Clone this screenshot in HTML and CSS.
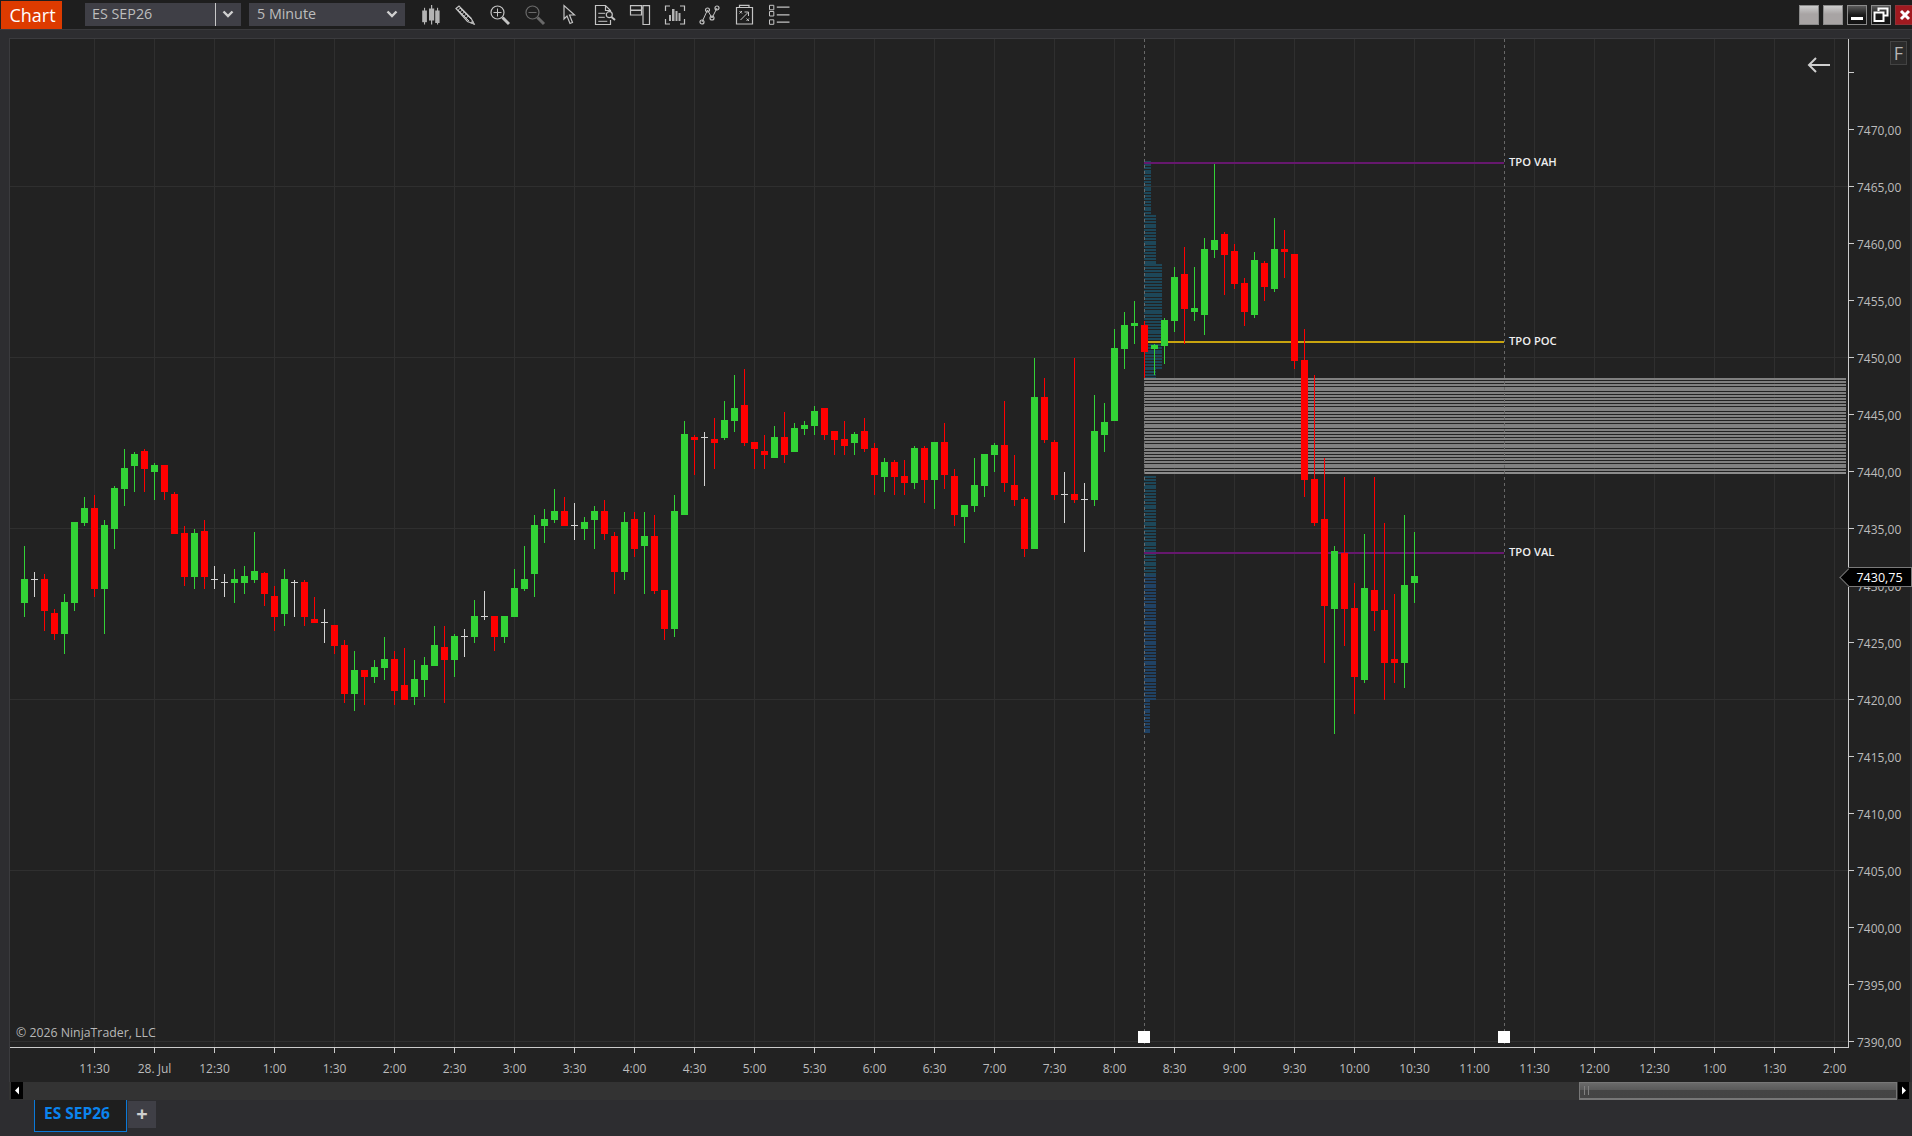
FILE: index.html
```html
<!DOCTYPE html>
<html lang="en">
<head>
<meta charset="utf-8">
<title>Chart - ES SEP26</title>
<link rel="stylesheet" href="styles.css">
</head>
<body>
<div class="app">
  <header class="toolbar">
    <div class="chart-tab">Chart</div>
    <div class="select select-instrument">
      <span class="select-label">ES SEP26</span>
      <span class="select-divider"></span>
      <svg class="chevron" viewBox="0 0 12 8"><path d="M1.500 1.500 6 6l4.500-4.500"/></svg>
    </div>
    <div class="select select-interval">
      <span class="select-label">5 Minute</span>
      <svg class="chevron" viewBox="0 0 12 8"><path d="M1.500 1.500 6 6l4.500-4.500"/></svg>
    </div>
    <nav class="tools">
      <svg class="tool" viewBox="0 0 20 20"><g class="solid"><rect x="2.200" y="5.500" width="4.700" height="11.700"/><rect x="4" y="2.800" width="1.100" height="16.700"/><rect x="9" y="3.500" width="5.200" height="12"/><rect x="11" y="0" width="1.200" height="19.500"/><rect x="15.200" y="5.500" width="4.400" height="12.500"/><rect x="17" y="2.800" width="1.100" height="16.700"/></g></svg>
      <svg class="tool" viewBox="0 0 20 20"><path class="line" d="M1 3.500 4 1l12 12 3 6-6.500-2.500z"/><path class="thin" d="M5 3l11 11M3 5l11 11M6 2.500l-2.800 2.500M8 4.500 5.200 7M10 6.500 7.200 9M12 8.500 9.200 11M14 10.500 11.200 13"/><path class="solid" d="M20 20l-5-2 2.800-2.800z"/></svg>
      <svg class="tool" viewBox="0 0 20 20"><circle class="line" cx="7.500" cy="7.500" r="6.500"/><path class="thin" d="M7.500 3.500v8M3.500 7.500h8"/><path class="handle" d="M12.500 12.500 19 19"/></svg>
      <svg class="tool tool-dim" viewBox="0 0 20 20"><circle class="line" cx="7.500" cy="7.500" r="6.500"/><path class="thin" d="M3.500 7.500h8"/><path class="handle" d="M12.500 12.500 19 19"/></svg>
      <svg class="tool" viewBox="0 0 20 20"><path class="line" d="M4 0.500v13.500l3-3 3 7.500 2.500-1-3-7.500h5z"/></svg>
      <svg class="tool" viewBox="0 0 20 20"><path class="line" d="M15.500 15v4.500H0.500V0.500h10l5 5v1.500M10.500 0.500v5h5"/><path class="thin" d="M3.300 8.300h7M3.300 12.300h6.500M3.300 16.300h9"/><circle class="line" cx="14.300" cy="9.700" r="3"/><path class="handle-thin" d="m16.500 12 3.500 3"/></svg>
      <svg class="tool" viewBox="0 0 20 20"><path class="line" d="M0.500 0.700h11v4.500H0.500zM0.500 5.500h11V10H0.500zM13 0.700h6.500v18.800H13zM11.500 3H13"/></svg>
      <svg class="tool" viewBox="0 0 20 20"><path class="line" d="M5 1H0.500v5M15 1h4.500v5M0.500 14v5H5M19.500 14v5H15"/><g class="solid"><rect x="4" y="10" width="2" height="6"/><rect x="7" y="4" width="2.500" height="12"/><rect x="10.500" y="6" width="2" height="10"/><rect x="13.500" y="8" width="2" height="8"/></g></svg>
      <svg class="tool" viewBox="0 0 20 20"><path class="thin" d="M3 17 8.500 5 13 13 18 3"/><circle class="line" cx="3" cy="17" r="2"/><circle class="line" cx="8.500" cy="5" r="2"/><circle class="line" cx="13" cy="13" r="2"/><circle class="line" cx="18" cy="3" r="2"/></svg>
      <svg class="tool" viewBox="0 0 20 20"><path class="line" d="M2.500 2.500h16v16.500h-16z"/><path class="line" d="M5.500 0.300h9.500V2.500H5.500z"/><path class="thin" d="M5.500 6 8 8.500M8 6 5.500 8.500M12.500 13.500l2.500 2.500M15 13.500 12.500 16M6.500 15 14 7.500M10.500 7h4v4"/></svg>
      <svg class="tool" viewBox="0 0 20 20"><path class="thin" d="M0.500 0.300h4.300v4.500H0.500zM0.500 6.500h4.300V11H0.500zM0.500 14.800h4.300v4.500H0.500z"/><path class="line" d="M7.800 2.200h12.700M7.800 9.800h12.700M7.800 17.200h12.700"/></svg>
    </nav>
    <div class="window-buttons">
      <span class="win-btn win-light"></span>
      <span class="win-btn win-light"></span>
      <span class="win-btn win-dark"><svg viewBox="0 0 18 18"><path d="M3 12.500h12" class="win-glyph"/></svg></span>
      <span class="win-btn win-dark"><svg viewBox="0 0 18 18"><path d="M6.500 5V2.500h9v7H12.500M2.500 6.500h9v8.500h-9z" class="win-glyph-thin"/></svg></span>
      <span class="win-btn win-red"><svg viewBox="0 0 18 18"><path d="m5 5 8 8M13 5l-8 8" class="win-glyph"/></svg></span>
    </div>
  </header>

  <main class="workspace">
    <section class="chart-pane">
      <svg id="chart" class="chart" width="1903" height="1044" viewBox="9 38 1903 1044" xmlns="http://www.w3.org/2000/svg"></svg>
      <div class="copyright">© 2026 NinjaTrader, LLC</div>
      <svg class="back-arrow" viewBox="0 0 24 16"><path d="M23 8H2M9 1 2 8l7 7"/></svg>
      <div class="f-button">F</div>
      <div class="price-marker">7430,75</div>
    </section>
    <div class="scrollbar">
      <span class="scroll-btn"><svg viewBox="0 0 12 17"><path d="M8 4.500v8L4 8.500z"/></svg></span>
      <div class="scroll-track">
        <div class="scroll-thumb"><span class="grip"></span><span class="grip"></span></div>
      </div>
      <span class="scroll-btn scroll-btn-end"><svg viewBox="0 0 11 17"><path d="M4 4.500v8l4-4z"/></svg></span>
    </div>
  </main>

  <footer class="tabbar">
    <div class="tab">ES SEP26</div>
    <div class="tab-add">+</div>
  </footer>
</div>
<script src="chart.js"></script>
</body>
</html>
```
FILE: styles.css
```css
* { box-sizing: border-box; }
html, body { margin: 0; height: 100%; background: #2d2d30; overflow: hidden; }
body { font-family: "Open Sans", "Liberation Sans", sans-serif; }
.app { display: flex; flex-direction: column; width: 1912px; height: 1136px; }

.toolbar { display: flex; align-items: center; height: 30px; flex: none; background: #1e1e1e; border-bottom: 1px solid #3a3a3d; padding-left: 1px; }
.chart-tab { width: 61px; height: 28px; margin-top: 1px; padding-left: 2px; background: #dd3b00; color: #fff; font-size: 18px; line-height: 28px; text-align: center; }
.select { display: flex; align-items: center; position: relative; width: 156px; height: 23px; margin-top: -1px; background: #3f3f46; color: #bdbdbd; font-size: 14.3px; }
.select-instrument { margin-left: 23px; }
.select-interval { margin-left: 8px; }
.select-label { padding-left: 7px; flex: 1; line-height: 21px; height: 23px; }
.select-interval .select-label { padding-left: 8px; }
.select-instrument .select-label { flex: none; width: 130px; }
.select-divider { width: 1px; height: 23px; background: #c8c8c8; flex: none; }
.chevron { width: 12px; height: 8px; flex: none; margin: 0 7px 0 5px; fill: none; stroke: #d0d0d0; stroke-width: 2.4; }
.select-instrument .chevron { margin: 0 7px 0 6px; }

.tools { display: flex; margin-left: 8px; }
.tool { width: 20px; height: 20px; margin: 0 7.45px; flex: none; overflow: visible; }
.tool .line { fill: none; stroke: #c4c4c4; stroke-width: 1.2; }
.tool .thin { fill: none; stroke: #c4c4c4; stroke-width: 1; }
.tool .solid { fill: #b4b4b4; }
.tool .handle { fill: none; stroke: #c4c4c4; stroke-width: 3; }
.tool .handle-thin { fill: none; stroke: #c4c4c4; stroke-width: 2; }
.tool-dim { opacity: .45; }

.window-buttons { display: flex; gap: 4px; margin-left: auto; align-self: flex-start; margin-top: 5px; margin-right: -3px; }
.win-btn { width: 20px; height: 20px; border: 1px solid #8a8a8a; display: block; }
.win-btn svg { display: block; width: 18px; height: 18px; }
.win-light { background: linear-gradient(#cdcdcd, #a8a4a4 45%, #a8a4a4); }
.win-dark { background: linear-gradient(#5a5a5a, #1a1a1a 50%, #111); }
.win-red { background: #a11a20; border-color: #8f3035; }
.win-glyph { fill: none; stroke: #fff; stroke-width: 3; }
.win-glyph-thin { fill: none; stroke: #fff; stroke-width: 2; }

.workspace { flex: 1; display: flex; flex-direction: column; padding: 8px 0 0 9px; min-height: 0; }
.chart-pane { position: relative; width: 1903px; height: 1044px; flex: none; }
.chart { display: block; }
.chart .axis-text { font-family: "Open Sans", "Liberation Sans", sans-serif; font-size: 12px; fill: #bcbcbc; }
.chart .tpo-text { font-family: "Open Sans", "Liberation Sans", sans-serif; font-size: 11.2px; font-weight: 600; fill: #efefef; }

.copyright { position: absolute; left: 7px; top: 987px; color: #b8b8b8; font-size: 12.3px; line-height: 16px; }
.back-arrow { position: absolute; left: 1798px; top: 19px; width: 24px; height: 16px; fill: none; stroke: #cfcfcf; stroke-width: 2; }
.f-button { position: absolute; left: 1881px; top: 3px; width: 17px; height: 24px; border: 1px solid #434343; background: #2b2b2b; color: #b5b5b5; font-size: 18px; line-height: 22px; text-align: center; }
.price-marker { position: absolute; left: 1839px; top: 529px; width: 64px; height: 20px; background: #000; border: 1px solid #7a7a7a; border-left: none; color: #fff; font-size: 12.5px; line-height: 19px; text-align: center; }
.price-marker::before { content: ""; position: absolute; left: -6px; top: 3px; width: 12px; height: 12px; background: #000; border-left: 1px solid #7a7a7a; border-bottom: 1px solid #7a7a7a; transform: rotate(45deg); }

.scrollbar { display: flex; align-items: flex-start; width: 1903px; height: 19px; flex: none; background: #333; border-bottom: 1px solid #444447; padding: 0 3px 0 2px; }
.scroll-btn { width: 12px; height: 17px; background: #000; display: block; flex: none; }
.scroll-btn-end { width: 11px; }
.scroll-btn svg { display: block; width: 100%; height: 17px; fill: #fff; }
.scroll-track { flex: 1; display: flex; justify-content: flex-end; height: 18px; padding-right: 1px; }
.scroll-thumb { width: 318px; height: 18px; display: flex; gap: 3px; padding: 3px 0 3px 4px; border: 1px solid #777; border-bottom-width: 2px; background: linear-gradient(#6a6a6a, #5a5a5a 45%, #454545 46%, #444); }
.grip { width: 1px; background: #808080; }

.tabbar { display: flex; flex: none; height: 36px; padding-left: 34px; background: #2d2d30; }
.tab { width: 93px; height: 32px; padding-right: 7px; background: #1e1e1e; border: 1px solid #0b79d8; border-top: none; color: #0b84ee; font-size: 15.5px; font-weight: 700; line-height: 27px; text-align: center; }
.tab-add { width: 28px; height: 27px; margin: 1px 0 0 1px; background: #3f3f46; color: #cfcfcf; font-size: 20px; font-weight: 700; line-height: 26px; text-align: center; }
```
FILE: chart.js
```js
(function () {
  var NS = 'http://www.w3.org/2000/svg';
  var svg = document.getElementById('chart');
  function el(name, attrs, text) {
    var n = document.createElementNS(NS, name);
    for (var k in attrs) n.setAttribute(k, attrs[k]);
    if (text) n.textContent = text;
    svg.appendChild(n);
    return n;
  }
  function rect(x, y, w, h, fill) {
    return el('rect', { x: x, y: y, width: w, height: h, fill: fill, 'shape-rendering': 'crispEdges' });
  }
  var GRID = '#2f2f2f', AXIS = '#cbcbcb', GREEN = '#32d236', RED = '#ff0000', DOJI = '#d2d2d2';
  var AXIS_X = 1848, AXIS_Y = 1047, TOP = 38;
  function priceY(p) { return 1041.5 - (p - 7390) * 11.4; }

  // background
  rect(9, 38, 1901, 1044, '#222222');
  rect(9, 38, 1903, 1, '#3b3b3e');
  rect(9, 38, 1, 1044, '#3b3b3e');
  rect(1910, 38, 2, 1044, '#2d2d30');

  // grid
  var times = ['11:30', '28. Jul', '12:30', '1:00', '1:30', '2:00', '2:30', '3:00', '3:30', '4:00', '4:30', '5:00', '5:30', '6:00', '6:30', '7:00', '7:30', '8:00', '8:30', '9:00', '9:30', '10:00', '10:30', '11:00', '11:30', '12:00', '12:30', '1:00', '1:30', '2:00'];
  times.forEach(function (t, i) { rect(94 + i * 60, 39, 1, AXIS_Y - 39, GRID); });
  for (var p = 7465; p >= 7390; p -= 15) rect(10, Math.floor(priceY(p)), AXIS_X - 10, 1, GRID);

  // TPO profile: one row per 0.25 tick, rounded to whole pixels
  var y;
  function stripes(y0, y1, x, w, fill, h) {
    for (y = y0; y < y1 - 0.5; y += 2.85) rect(x, Math.round(y), w, h, fill);
  }
  stripes(161, 215, 1144, 7, '#1d4759', 2);
  stripes(215, 264, 1144, 12, '#1d4759', 2);
  stripes(264, 368, 1144, 18, '#1d4759', 2);
  stripes(368, 378, 1144, 12, '#1d4759', 2);
  stripes(476, 575, 1144, 12, '#1d4759', 2);
  stripes(575, 700, 1144, 12, '#204264', 2);
  stripes(700, 734, 1144, 6, '#204264', 2);
  stripes(378, 474, 1144, 702, '#808080', 2);
  rect(1144, 472, 702, 2, '#8c8c8c');

  // session bounds
  [1144, 1504].forEach(function (x) {
    el('line', { x1: x + 0.5, y1: 39, x2: x + 0.5, y2: 1047, stroke: '#686868', 'stroke-width': 1, 'stroke-dasharray': '3 3' });
  });

  // TPO levels
  [[162, '#66186e', 'TPO VAH'], [341, '#c8a40f', 'TPO POC'], [552, '#66186e', 'TPO VAL']].forEach(function (l) {
    rect(1144, l[0], 360, 2, l[1]);
    el('text', { x: 1509, y: l[0] + 4, 'class': 'tpo-text' }, l[2]);
  });

  // candles: [type, bodyTop, bodyBottom, wickTop, wickBottom] in 3x crop coordinates
  var segments = [
    { x: 24, o: 420, d: [
      ['G',477,549,378,591],['D',478,478,456,531],['R',477,573,462,633],['R',579,642,567,660],['G',546,642,522,702],['G',306,549,306,573],
      ['G',264,309,231,318],['R',264,507,225,531],['G',315,507,300,642],['G',204,327,198,387],['G',144,207,87,258],['G',102,138,96,216],
      ['R',93,147,87,216],['G',135,156,129,240],['R',135,216,135,240],['R',222,342,216,342],['R',339,471,318,498],['G',339,471,327,507],
      ['R',333,471,300,507],['D',478,478,438,507],['D',487,487,462,531],['G',477,489,447,549],['G',468,489,438,522],['G',453,480,336,489],
      ['R',459,522,456,558],['R',528,591,498,633],['G',477,582,447,618],['D',487,487,480,591],['R',486,591,480,618],['R',597,609,531,609],
      ['D',607,607,567,669],['R',615,678,615,702],['R',675,822,660,849],['G',750,822,693,873],['R',750,771,750,855],['G',741,771,720,789]
    ]},
    { x: 384, o: 400, d: [
      ['G',777,804,711,840],['R',777,873,753,915],['R',855,900,744,900],['G',837,891,780,915],['G',795,840,771,891],['G',735,798,678,798],
      ['R',741,780,678,909],['G',708,780,702,831],['D',709,709,687,771],['G',648,711,600,729],['D',649,649,573,660],['R',648,711,648,753],
      ['G',648,711,648,729],['G',564,651,507,651],['G',537,567,438,573],['G',375,522,345,591],['G',357,378,327,429],['G',333,360,267,369],
      ['R',333,378,291,378],['D',376,376,309,420],['G',366,387,351,420],['G',333,360,318,447],['R',333,402,300,420],['R',408,516,396,582],
      ['G',366,516,336,540],['R',357,447,336,471],['G',408,438,336,582],['R',408,573,345,582],['R',570,687,570,720],['G',333,687,285,711],
      ['G',102,345,63,345],['R',111,120,105,225],['D',112,112,96,258],['R',117,129,54,207],['G',60,114,3,120],['G',24,63,-75,96],
      ['R',15,129,-93,138],['R',126,147,126,207]
    ]},
    { x: 764, o: 340, d: [
      ['R',333,345,285,387],['G',291,354,258,354],['R',291,345,216,369],['G',264,336,249,336],['G',255,267,243,285],['G',213,258,198,285],
      ['R',204,285,204,300],['R',273,300,273,345],['R',297,318,243,345],['G',282,309,276,345],['R',273,327,234,336],['R',324,405,309,465],
      ['G',366,411,354,456],['R',366,411,360,465],['R',408,429,360,465],['G',324,429,318,447],['R',324,420,318,489],['G',306,420,306,507],
      ['R',306,405,249,447],['R',408,525,387,558],['G',495,531,495,609],['G',435,498,354,516],['G',342,438,342,471],['G',315,345,309,396],
      ['R',315,429,183,456],['R',435,480,345,498],['R',477,627,471,651],['G',171,627,54,627],['R',171,300,114,309],['R',306,465,300,480],
      ['D',463,463,396,549],['R',462,480,54,489],['D',478,478,429,636],['G',273,480,165,498]
    ]},
    { x: 1104, o: 140, d: [
      ['G',846,885,789,936],['G',624,843,567,843],['G',555,627,516,687],['G',549,558,483,612],['R',555,636,543,714],['G',615,627,612,705],
      ['G',540,618,534,672],['G',411,543,381,576],['R',402,507,321,612],['G',504,516,381,543],['G',327,525,294,585],['G',300,330,72,354],
      ['R',282,345,276,465],['R',333,432,312,447],['R',429,516,414,558],['G',360,525,336,534],['R',369,441,363,483],['G',327,447,234,456],
      ['R',327,336,270,414],['R',342,663,342,687],['R',660,1020,567,1071],['R',1017,1149,705,1158],['R',1137,1398,954,1569]
    ]},
    { x: 1334, o: 460, d: [
      ['G',273,447,258,822],['R',279,447,51,558],['R',444,651,369,762],['G',384,660,222,669],['R',390,453,51,513],['R',450,609,189,720],
      ['R',597,609,402,669],['G',375,609,165,684],['G',348,369,216,429]
    ]}
  ];
  segments.forEach(function (s) {
    s.d.forEach(function (c, k) {
      var x = s.x + k * 10;
      var color = c[0] === 'G' ? GREEN : c[0] === 'R' ? RED : DOJI;
      var bt = Math.round(s.o + c[1] / 3), bb = Math.round(s.o + c[2] / 3);
      var wt = Math.round(s.o + c[3] / 3), wb = Math.round(s.o + c[4] / 3);
      rect(x, wt, 1, wb - wt, color);
      if (c[0] === 'D') rect(x - 3, bt, 7, 1, color);
      else rect(x - 3, bt, 7, bb - bt, color);
    });
  });

  // axes
  rect(10, AXIS_Y, AXIS_X - 10, 1, AXIS);
  rect(AXIS_X, TOP + 1, 1, AXIS_Y - TOP, AXIS);
  times.forEach(function (t, i) {
    var x = 94 + i * 60;
    rect(x, AXIS_Y + 1, 1, 5, AXIS);
    el('text', { x: x + 0.5, y: 1073, 'text-anchor': 'middle', 'class': 'axis-text' }, t);
  });
  for (p = 7475; p >= 7390; p -= 5) {
    var py = Math.floor(priceY(p));
    rect(AXIS_X + 1, py, 5, 1, AXIS);
    if (p < 7475) el('text', { x: 1857, y: py + 6, 'class': 'axis-text' }, p + ',00');
  }

  // session handles
  [1144, 1504].forEach(function (x) {
    rect(x - 6, 1031, 12, 12, '#ffffff');
  });
})();
```
